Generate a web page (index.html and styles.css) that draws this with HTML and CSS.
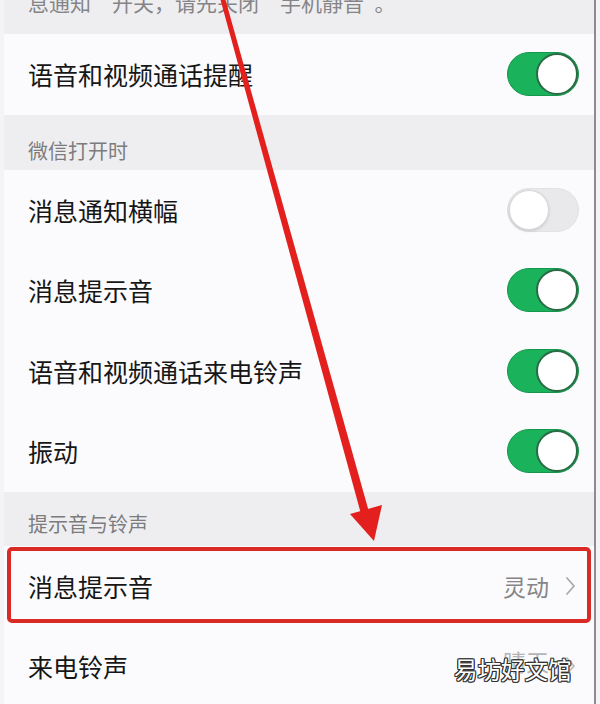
FILE: index.html
```html
<!DOCTYPE html>
<html lang="zh-CN">
<head>
<meta charset="utf-8">
<link rel="stylesheet" href="styles.css">
</head>
<body>
<div class="screen">
  <div class="top-note"><span>息通知“开关，请先关闭“手机静音”。</span></div>
  <div class="row"><span class="label">语音和视频通话提醒</span><span class="switch on"></span></div>
  <div class="header header-first">微信打开时</div>
  <div class="row"><span class="label">消息通知横幅</span><span class="switch"></span></div>
  <div class="row"><span class="label">消息提示音</span><span class="switch on"></span></div>
  <div class="row"><span class="label">语音和视频通话来电铃声</span><span class="switch on"></span></div>
  <div class="row"><span class="label">振动</span><span class="switch on"></span></div>
  <div class="header header-second">提示音与铃声</div>
  <div class="row highlight"><span class="label">消息提示音</span><span class="value">灵动</span><svg class="chev" width="11" height="20" viewBox="0 0 11 20"><polyline points="2,2 9,10 2,18" fill="none" stroke="#aaaaaa" stroke-width="1.8" stroke-linecap="round" stroke-linejoin="round"/></svg></div>
  <div class="row"><span class="label">来电铃声</span><span class="value faded">晴天</span><svg class="chev" width="11" height="20" viewBox="0 0 11 20"><polyline points="2,2 9,10 2,18" fill="none" stroke="#bbbbbb" stroke-width="1.8" stroke-linecap="round" stroke-linejoin="round"/></svg></div>
  <svg class="arrow" width="600" height="704" viewBox="0 0 600 704">
    <polygon points="220,-2 225,-2 369,512 361,514" fill="#e3201d"/>
    <polygon points="350,514 382,505 374,541" fill="#e3201d"/>
  </svg>
  <div class="watermark">易坊好文馆</div>
</div>
</body>
</html>
```

FILE: styles.css
```css
html, body {
  margin: 0;
  padding: 0;
  background: #f4f4f6;
}
body {
  font-family: "Noto Sans CJK SC", "Noto Sans", sans-serif;
  color: #222222;
}
.screen {
  position: relative;
  width: 590px;
  height: 704px;
  margin-left: 4px;
  border-right: 2px solid #8c8c8e;
  background: #eeeef1;
  overflow: hidden;
}
.top-note {
  height: 34px;
  overflow: hidden;
  padding-left: 24px;
  box-sizing: border-box;
  color: #858587;
  font-size: 21px;
  line-height: 28px;
}
.top-note span {
  display: block;
  margin-top: -12px;
}
.row {
  height: 80.5px;
  display: flex;
  align-items: center;
  padding: 0 15px 0 24px;
  background: #fbfbfd;
  box-sizing: border-box;
}
.label {
  flex: 1;
  font-size: 25px;
  line-height: 32px;
  color: #161616;
}
.header {
  display: flex;
  align-items: flex-end;
  padding-left: 24px;
  box-sizing: border-box;
  color: #7c7c7e;
  font-size: 20px;
  line-height: 28px;
}
.header-first {
  height: 55px;
  padding-bottom: 5px;
}
.header-second {
  height: 54px;
  padding-bottom: 8px;
}
.switch {
  position: relative;
  width: 72px;
  height: 44px;
  border-radius: 22px;
  background: #e9e9eb;
  box-sizing: border-box;
  border: 1px solid #e2e2e4;
}
.switch::after {
  content: "";
  position: absolute;
  top: 1px;
  left: 1px;
  width: 40px;
  height: 40px;
  border-radius: 50%;
  background: #ffffff;
  box-sizing: border-box;
  border: 1px solid #d8d8da;
  box-shadow: 0 1px 3px rgba(0, 0, 0, 0.15);
}
.switch.on {
  background: #1bb25c;
  border: 1px solid #15964c;
}
.switch.on::after {
  left: auto;
  right: 0;
  top: 0;
  width: 42px;
  height: 42px;
  border: 2px solid #2a6b45;
  box-shadow: none;
}
.value {
  font-size: 23px;
  line-height: 30px;
  color: #858587;
  margin-right: 16px;
}
.value.faded {
  color: #b5b5b7;
  margin-top: -10px;
}
.chev {
  margin-right: 3px;
}
.highlight {
  position: relative;
}
.highlight::after {
  content: "";
  position: absolute;
  left: 3px;
  right: 3px;
  top: 1px;
  bottom: 3px;
  border: 4px solid #d92a25;
  border-radius: 5px;
}
.arrow {
  position: absolute;
  left: -4px;
  top: 0;
}
.watermark {
  position: absolute;
  left: 450px;
  top: 654px;
  font-size: 23.5px;
  line-height: 30px;
  color: #ffffff;
  text-shadow: 1px 0 0 #333, -1px 0 0 #333, 0 1px 0 #333, 0 -1px 0 #333, 1px 1px 0 #333, -1px -1px 0 #333, 1px -1px 0 #333, -1px 1px 0 #333;
}
```
